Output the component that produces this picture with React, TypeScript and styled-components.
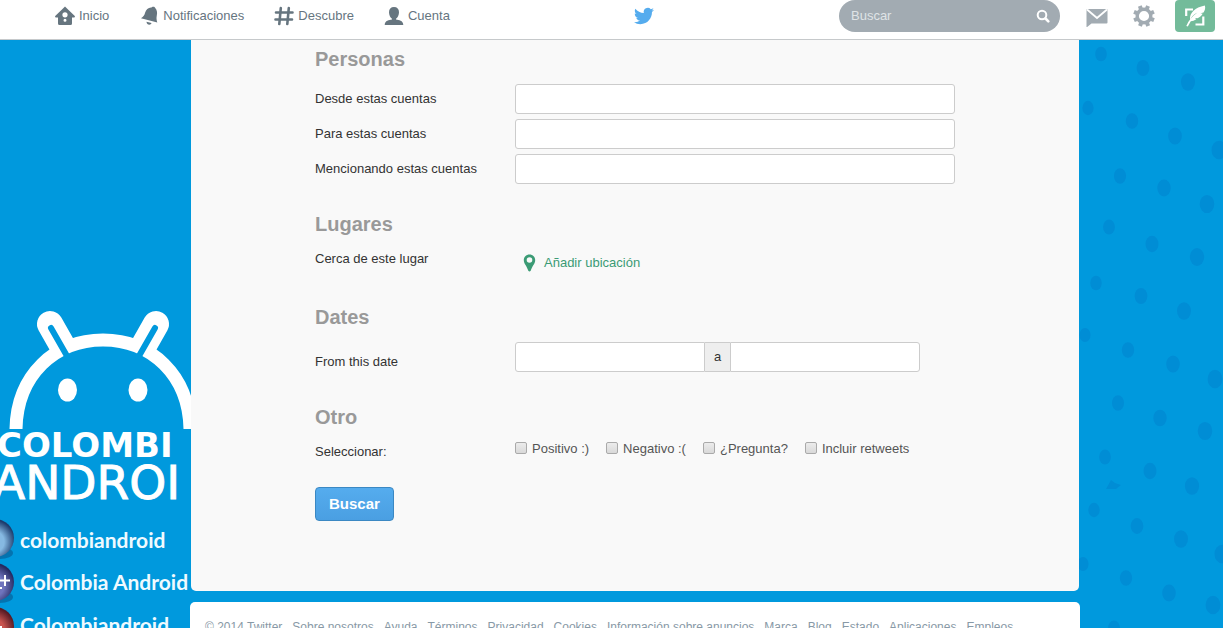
import React from "react";
import styled, { createGlobalStyle } from "styled-components";

const BLUE = "#0099dd";
const SLATE = "#66757f";
const SILVER = "#a2abb2";

const GlobalStyle = createGlobalStyle`
  *, *::before, *::after { box-sizing: border-box; }
  body {
    margin: 0;
    background: ${BLUE};
    color: #333;
    font: 13px/20px "Liberation Sans", Arial, sans-serif;
  }
  input, button { font: inherit; }
`;

const Page = styled.div`
  position: relative;
  height: 100vh;
  overflow: hidden;
`;

const Backdrop = styled.svg`
  position: absolute;
  inset: 0;
  width: 100%;
  height: 100%;
`;

const TopBar = styled.header`
  position: relative;
  display: flex;
  align-items: flex-start;
  justify-content: space-between;
  height: 40px;
  padding: 0 8px 0 55px;
  background: #fff;
  border-bottom: 1px solid #c6c9cb;
`;

const Nav = styled.nav`
  display: flex;
  gap: 30px;
`;

const NavLink = styled.a`
  display: flex;
  align-items: center;
  gap: 4px;
  height: 32px;
  color: ${SLATE};
  text-decoration: none;
`;

const Brand = styled.a`
  display: flex;
  align-items: center;
  height: 32px;
`;

const Tools = styled.div`
  display: flex;
  align-items: center;
`;

const SearchBox = styled.form`
  display: flex;
  align-items: center;
  width: 221px;
  height: 32px;
  margin-right: 26px;
  padding: 0 10px 0 12px;
  border-radius: 16px;
  background: ${SILVER};
`;

const SearchInput = styled.input`
  flex: 1;
  min-width: 0;
  padding: 0;
  border: 0;
  outline: 0;
  background: transparent;
  color: #fff;
  &::placeholder { color: #dfe3e6; opacity: 1; }
`;

const IconButton = styled.button`
  display: flex;
  padding: 0;
  border: 0;
  background: none;
`;

const ToolGroup = styled.div`
  display: flex;
  align-items: center;
  gap: 25px;
`;

const ComposeButton = styled(IconButton)`
  align-items: center;
  justify-content: center;
  width: 40px;
  height: 32px;
  margin-left: -5px;
  border-radius: 4px;
  background: #73bb9a;
`;

const Columns = styled.div`
  position: relative;
  display: grid;
  grid-template-columns: minmax(0, 190fr) minmax(0, 890px) minmax(0, 143fr);
`;

const Content = styled.div`
  grid-column: 2;
`;

const Panel = styled.main`
  margin: 0 1px 11px;
  padding: 7px 124px 70px;
  background: #f9f9f9;
  border-radius: 0 0 5px 5px;
`;

const Section = styled.section`
  margin-bottom: 28px;
  &:last-of-type { margin-bottom: 25px; }
`;

const Heading = styled.h2`
  margin: 0 0 13px;
  color: #999;
  font-size: 20px;
  line-height: 24px;
`;

const Rows = styled.div`
  display: grid;
  gap: 5px;
`;

const Row = styled.div`
  display: grid;
  grid-template-columns: 200px minmax(0, 440px);
  align-items: start;
`;

const Label = styled.label<{ $tall?: boolean; $low?: boolean }>`
  line-height: ${(p) => (p.$tall ? 30 : 20)}px;
  padding-top: ${(p) => (p.$low ? 5 : 0)}px;
`;

const TextInput = styled.input`
  width: 100%;
  height: 30px;
  padding: 0 8px;
  border: 1px solid #ccc;
  border-radius: 3px;
  background: #fff;
`;

const DateRange = styled.div`
  display: grid;
  grid-template-columns: minmax(0, 190px) 25px minmax(0, 190px);
  ${TextInput}:first-child { border-radius: 3px 0 0 3px; }
  ${TextInput}:last-child { border-radius: 0 3px 3px 0; }
`;

const Joiner = styled.span`
  background: #eee;
  border: solid #ccc;
  border-width: 1px 0;
  line-height: 28px;
  text-align: center;
`;

const PlaceLink = styled.a`
  display: flex;
  align-items: center;
  gap: 8px;
  height: 28px;
  padding-left: 8px;
  color: #3b9b75;
  text-decoration: none;
`;

const Choices = styled.div`
  display: flex;
  flex-wrap: wrap;
  gap: 17px;
`;

const Choice = styled.label`
  display: flex;
  align-items: flex-start;
  gap: 5px;
  color: #555;
  line-height: 14px;
`;

const Tick = styled.input`
  appearance: none;
  width: 12px;
  height: 12px;
  margin: 0;
  border: 1px solid #aaa;
  border-radius: 2px;
  background: linear-gradient(#ececec, #d9d9d9);
`;

const SubmitButton = styled.button`
  height: 34px;
  padding: 0 13px;
  border: 1px solid #3b88c3;
  border-radius: 4px;
  background: linear-gradient(#55acee, #4a9fe2);
  color: #fff;
  font-size: 15px;
  font-weight: bold;
`;

const Footer = styled.footer`
  display: flex;
  flex-wrap: wrap;
  gap: 0 10px;
  padding: 15px;
  border-radius: 5px 5px 0 0;
  background: #fff;
  color: #8899a6;
  font-size: 12px;
`;

const FooterLink = styled.a`
  color: inherit;
  text-decoration: none;
`;

const dots: [number, number][] = [
  [1101, 54], [1143, 68], [1188, 82],
  [1088, 108], [1132, 121], [1175, 136], [1219, 150],
  [1120, 176], [1164, 188], [1207, 204],
  [1109, 227], [1152, 244], [1197, 257],
  [1096, 283], [1141, 296], [1184, 311],
  [1085, 335], [1128, 350], [1173, 364], [1215, 379],
  [1118, 403], [1160, 418], [1205, 431],
  [1105, 457], [1150, 471], [1192, 486],
  [1094, 510], [1137, 526], [1181, 539], [1222, 554],
  [1083, 564], [1126, 578], [1169, 593], [1213, 605],
  [1114, 628],
];

const accounts = [
  { name: "colombiandroid", baseline: 548, sphere: "skySphere", cy: 538 },
  { name: "Colombia Android", baseline: 590, sphere: "plumSphere", cy: 582 },
  { name: "Colombiandroid", baseline: 633, sphere: "redSphere", cy: 626 },
];

const Sphere = ({ id, from, to }: { id: string; from: string; to: string }) => (
  <radialGradient id={id} cx="45%" cy="60%" r="58%">
    <stop offset="0" stopColor={from} />
    <stop offset="0.5" stopColor={from} />
    <stop offset="1" stopColor={to} />
  </radialGradient>
);

const Wallpaper = () => (
  <Backdrop aria-hidden="true">
    <defs>
      <Sphere id="skySphere" from="#86b9e2" to="#1d3b6c" />
      <Sphere id="plumSphere" from="#6f74bd" to="#25295f" />
      <Sphere id="redSphere" from="#c9544f" to="#571a24" />
    </defs>
    {dots.map(([x, y]) => (
      <ellipse
        key={`${x}-${y}`}
        cx={x}
        cy={y}
        rx={5.5 + (x - 1080) / 70}
        ry={7 + (x - 1080) / 60}
        fill="#008dd5"
      />
    ))}
    <path d="M1106 489l5-9 4 3 6 2-5 4z" fill="#008dd5" />
    <g stroke="#fff" strokeWidth="26" strokeLinecap="round">
      <path d="M50 324L67 354" />
      <path d="M156 324L139 354" />
    </g>
    <path d="M16 429C17 375 55 340 103 340S189 375 190 429" fill={BLUE} stroke="#fff" strokeWidth="13" />
    <g stroke={BLUE} strokeWidth="6" strokeLinecap="round">
      <path d="M51 328L67 356" />
      <path d="M155 328L139 356" />
    </g>
    <ellipse cx="67.500" cy="390" rx="9.500" ry="11.500" fill="#fff" />
    <ellipse cx="138" cy="390" rx="9.500" ry="11.500" fill="#fff" />
    <g fill="#fff" fontFamily='"DejaVu Sans", sans-serif'>
      <text x="-3" y="457" fontSize="34" fontWeight="bold">COLOMBI</text>
      <text x="-7" y="499" fontSize="47" stroke="#fff">ANDROI</text>
    </g>
    {accounts.map((a) => (
      <g key={a.name}>
        <ellipse cx="0" cy={a.cy + 15} rx="13" ry="6" fill="#075a91" opacity="0.6" />
        <circle cx="-5" cy={a.cy} r="19" fill={`url(#${a.sphere})`} />
        <text x="20" y={a.baseline} fill="#effaff" fontFamily='Lato, sans-serif' fontSize="21" fontWeight="bold">
          {a.name}
        </text>
      </g>
    ))}
    <path d="M0 580.500H10M5 575V586M0 588H2M0 627H2" stroke="#fff" strokeWidth="2" />
  </Backdrop>
);

const HomeIcon = () => (
  <svg width="20" height="20" viewBox="0 0 20 20" fill={SLATE}>
    <path
      fillRule="evenodd"
      d="M10 0.500L12 2.500L19.800 10Q20.300 11.500 19 11.500H17V17.500Q17 19 15.500 19H4.500Q3 19 3 17.500V11.500H1Q-0.300 11.500 0.200 10L8 2.500ZM10 6.200A2.600 2.600 0 1 0 10 11.400A2.600 2.600 0 1 0 10 6.200ZM10 12.800A1.500 1.500 0 1 0 10 15.800A1.500 1.500 0 1 0 10 12.800Z"
    />
  </svg>
);

const BellIcon = () => (
  <svg width="20" height="20" viewBox="0 0 20 20" fill={SLATE}>
    <path d="M13.500 0.800C15 0.300 16 1 16.200 2C18 4 18.500 6.500 17.800 9.500C17.300 12 17.500 14 18.300 16.500L2 12.300C4.500 10.500 5.500 9 6 7C7 3.500 9.500 1.200 12.500 1.500Z" />
    <path d="M7.500 15.700L12.500 17C12 19.500 7.500 19.200 7.500 15.700Z" />
  </svg>
);

const HashIcon = () => (
  <svg width="20" height="20" viewBox="0 0 20 20" stroke={SLATE} strokeWidth="2.600" strokeLinecap="round">
    <path d="M6.800 2L5.300 18M14.800 2L13.300 18M2 6.500H18.500M1.500 13.500H18" />
  </svg>
);

const PersonIcon = () => (
  <svg width="20" height="20" viewBox="0 0 20 20" fill={SLATE}>
    <path d="M10 1C13.200 1 15 3 15 6.200C15 9 13.600 11.700 12 12.700V13.500C15 14.200 19 14 19.300 19H0.700C1 14 5 14.200 8 13.500V12.700C6.400 11.700 5 9 5 6.200C5 3 6.800 1 10 1Z" />
  </svg>
);

const BirdIcon = () => (
  <svg width="20" height="20" viewBox="0 0 24 24" fill="#55acee">
    <path d="M23.953 4.570a10 10 0 0 1-2.825.775 4.958 4.958 0 0 0 2.163-2.723c-.951.555-2.005.959-3.127 1.184a4.920 4.920 0 0 0-8.384 4.482C7.690 8.095 4.067 6.130 1.640 3.162a4.822 4.822 0 0 0-.666 2.475c0 1.710.870 3.213 2.188 4.096a4.904 4.904 0 0 1-2.228-.616v.060a4.923 4.923 0 0 0 3.946 4.827 4.996 4.996 0 0 1-2.212.085 4.936 4.936 0 0 0 4.604 3.417 9.867 9.867 0 0 1-6.102 2.105c-.390 0-.779-.023-1.170-.067a13.995 13.995 0 0 0 7.557 2.209c9.053 0 13.998-7.496 13.998-13.985 0-.210 0-.420-.015-.630A9.935 9.935 0 0 0 24 4.590z" />
  </svg>
);

const SearchIcon = () => (
  <svg width="14" height="14" viewBox="0 0 14 14" fill="none" stroke="#fff" strokeLinecap="round">
    <circle cx="6" cy="6" r="4.300" strokeWidth="2" />
    <path d="M9.500 9.500L12.300 12.300" strokeWidth="2.600" />
  </svg>
);

const MailIcon = () => (
  <svg width="22" height="22" viewBox="0 0 22 22">
    <path d="M1.500 4H20.500Q21.500 4 21.500 5V17.500Q21.500 18.500 20.500 18.500H5.500L0.500 22.500V5Q0.500 4 1.500 4Z" fill={SILVER} />
    <path d="M1 4.500L11 13L21 4.500" fill="none" stroke="#fff" strokeWidth="1.800" />
  </svg>
);

const GearIcon = () => (
  <svg width="22" height="22" viewBox="-11 -11 22 22" fill="none" stroke={SILVER}>
    <circle r="6.800" strokeWidth="3.400" />
    {[0, 45, 90, 135, 180, 225, 270, 315].map((angle) => (
      <path key={angle} d="M0 -7.500V-10.800" strokeWidth="4" transform={`rotate(${angle + 22})`} />
    ))}
  </svg>
);

const QuillIcon = () => (
  <svg width="22" height="22" viewBox="0 0 22 22">
    <path d="M9 4.500H2.200V11M19.300 11.500V19.500H11.500" fill="none" stroke="#fff" strokeWidth="2.200" />
    <path
      d="M20.800 0.500C21.800 3 20.800 5.500 19.500 7.500L16.500 8.300L18.700 8.700C17.500 10.700 15.500 12.300 13.500 13.200L11 13L12.300 14.200C10.500 15.500 8.500 16 6.800 16.200L3.800 21.500L2.300 21C4.500 15.500 8.500 11 13.500 7.500C9.500 9.500 7.500 12 6 14.500C5.500 8 11 2.500 20.800 0.500Z"
      fill="#fff"
    />
  </svg>
);

const PinIcon = () => (
  <svg width="13" height="18" viewBox="0 0 13 18" fill="#3b9b75">
    <path
      fillRule="evenodd"
      d="M6.500 0.500C10 0.500 12.200 3 12.200 6.200C12.200 9.700 9 12 7.700 16.800Q6.500 18 5.300 16.800C4 12 0.800 9.700 0.800 6.200C0.800 3 3 0.500 6.500 0.500ZM6.500 3.200A2.800 2.800 0 1 0 6.500 8.800A2.800 2.800 0 1 0 6.500 3.200Z"
    />
  </svg>
);

const navItems = [
  { text: "Inicio", Icon: HomeIcon },
  { text: "Notificaciones", Icon: BellIcon },
  { text: "Descubre", Icon: HashIcon },
  { text: "Cuenta", Icon: PersonIcon },
];

const people = [
  { id: "from", text: "Desde estas cuentas" },
  { id: "to", text: "Para estas cuentas" },
  { id: "mention", text: "Mencionando estas cuentas" },
];

const choices = ["Positivo :)", "Negativo :(", "¿Pregunta?", "Incluir retweets"];

const footerLinks = [
  "Sobre nosotros", "Ayuda", "Términos", "Privacidad", "Cookies",
  "Información sobre anuncios", "Marca", "Blog", "Estado", "Aplicaciones", "Empleos",
];

export default function App() {
  return (
    <Page>
      <GlobalStyle />
      <Wallpaper />
      <TopBar>
        <Nav>
          {navItems.map(({ text, Icon }) => (
            <NavLink href="#" key={text}>
              <Icon />
              {text}
            </NavLink>
          ))}
        </Nav>
        <Brand href="#" aria-label="Twitter">
          <BirdIcon />
        </Brand>
        <Tools>
          <SearchBox>
            <SearchInput type="text" placeholder="Buscar" aria-label="Buscar" />
            <IconButton type="button" aria-label="Buscar">
              <SearchIcon />
            </IconButton>
          </SearchBox>
          <ToolGroup>
            <IconButton type="button" aria-label="Mensajes">
              <MailIcon />
            </IconButton>
            <IconButton type="button" aria-label="Configuración">
              <GearIcon />
            </IconButton>
            <ComposeButton type="button" aria-label="Twittear">
              <QuillIcon />
            </ComposeButton>
          </ToolGroup>
        </Tools>
      </TopBar>
      <Columns>
        <Content>
          <Panel>
            <Section>
              <Heading>Personas</Heading>
              <Rows>
                {people.map((p) => (
                  <Row key={p.id}>
                    <Label htmlFor={p.id} $tall>{p.text}</Label>
                    <TextInput id={p.id} type="text" />
                  </Row>
                ))}
              </Rows>
            </Section>
            <Section>
              <Heading>Lugares</Heading>
              <Row>
                <Label as="span">Cerca de este lugar</Label>
                <PlaceLink href="#">
                  <PinIcon />
                  Añadir ubicación
                </PlaceLink>
              </Row>
            </Section>
            <Section>
              <Heading>Dates</Heading>
              <Row>
                <Label htmlFor="since" $tall $low>From this date</Label>
                <DateRange>
                  <TextInput id="since" type="text" />
                  <Joiner>a</Joiner>
                  <TextInput type="text" aria-label="a" />
                </DateRange>
              </Row>
            </Section>
            <Section>
              <Heading>Otro</Heading>
              <Row>
                <Label as="span">Seleccionar:</Label>
                <Choices>
                  {choices.map((c) => (
                    <Choice key={c}>
                      <Tick type="checkbox" />
                      {c}
                    </Choice>
                  ))}
                </Choices>
              </Row>
            </Section>
            <SubmitButton type="button">Buscar</SubmitButton>
          </Panel>
          <Footer>
            <span>© 2014 Twitter</span>
            {footerLinks.map((l) => (
              <FooterLink href="#" key={l}>{l}</FooterLink>
            ))}
          </Footer>
        </Content>
      </Columns>
    </Page>
  );
}
